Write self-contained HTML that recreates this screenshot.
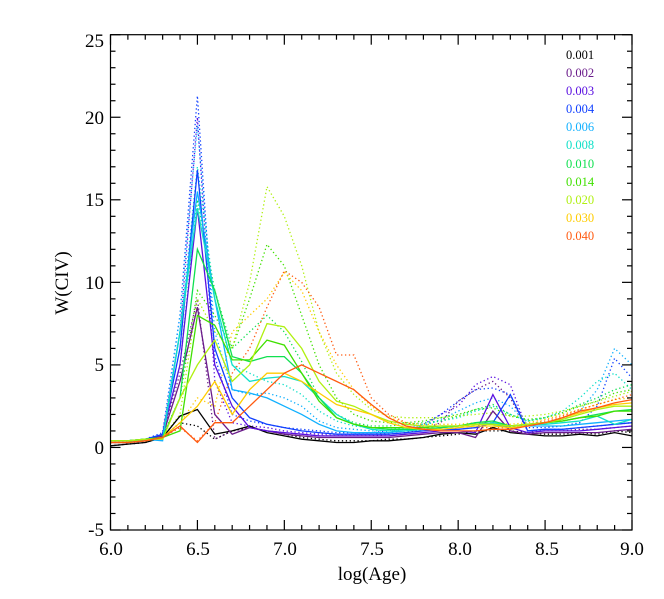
<!DOCTYPE html>
<html><head><meta charset="utf-8"><style>
html,body{margin:0;padding:0;background:#fff;width:664px;height:599px;overflow:hidden}
svg{display:block}
text{font-family:"Liberation Serif",serif}
</style></head><body>
<svg id="s" width="664" height="599" viewBox="0 0 664 599" xmlns="http://www.w3.org/2000/svg">
<g id="curves"></g>
<g id="axes" stroke="#000" stroke-width="1.2" fill="none"></g>
<g font-size="19" fill="#000" text-anchor="end" font-family="Liberation Serif, serif">
<text x="104" y="47">25</text>
<text x="104" y="124">20</text>
<text x="104" y="206">15</text>
<text x="104" y="289">10</text>
<text x="104" y="371">5</text>
<text x="104" y="454">0</text>
<text x="104" y="536">-5</text>
</g>
<g font-size="19" fill="#000" text-anchor="middle" font-family="Liberation Serif, serif">
<text x="111" y="555">6.0</text>
<text x="198" y="555">6.5</text>
<text x="285" y="555">7.0</text>
<text x="372" y="555">7.5</text>
<text x="460" y="555">8.0</text>
<text x="547" y="555">8.5</text>
<text x="632" y="555">9.0</text>
<text x="372" y="580">log(Age)</text>
<text transform="translate(68,283) rotate(-90)">W(CIV)</text>
</g>
<g font-size="12.5" font-family="Liberation Serif, serif">
<text x="566" y="59" fill="#000">0.001</text>
<text x="566" y="77" fill="#6a1b8a">0.002</text>
<text x="566" y="95" fill="#5a10e0">0.003</text>
<text x="566" y="113" fill="#1040ff">0.004</text>
<text x="566" y="131" fill="#10b0ff">0.006</text>
<text x="566" y="149" fill="#10e0c8">0.008</text>
<text x="566" y="168" fill="#10e050">0.010</text>
<text x="566" y="186" fill="#40e000">0.014</text>
<text x="566" y="204" fill="#b0f010">0.020</text>
<text x="566" y="222" fill="#ffcc00">0.030</text>
<text x="566" y="240" fill="#ff5a10">0.040</text>
</g>
</svg>
<script>
(function(){
var L=110.5,R=632,T=34.7,B=530;
function X(a){return L+(a-6)*(R-L)/3}
function Y(w){return T+(25-w)*(B-T)/30}
var ns="http://www.w3.org/2000/svg";
var ax=document.getElementById("axes");
function line(x1,y1,x2,y2){var l=document.createElementNS(ns,"line");l.setAttribute("x1",x1);l.setAttribute("y1",y1);l.setAttribute("x2",x2);l.setAttribute("y2",y2);ax.appendChild(l);}
var r=document.createElementNS(ns,"rect");r.setAttribute("x",L);r.setAttribute("y",T);r.setAttribute("width",R-L);r.setAttribute("height",B-T);ax.appendChild(r);
for(var i=0;i<=30;i++){var x=X(6+i*0.1);var len=(i%5==0)?10:5;line(x,B,x,B-len);line(x,T,x,T+len);}
for(var j=-5;j<=25;j++){var y=Y(j);var len=(j%5==0)?10:5;line(L,y,L+len,y);line(R,y,R-len,y);}
var C={a:"#000",b:"#6a1b8a",c:"#5a10e0",d:"#1040ff",e:"#10b0ff",f:"#10e0c8",g:"#10e050",h:"#40e000",i:"#b0f010",j:"#ffcc00",k:"#ff5a10"};
var S={
a:[0.1,0.2,0.3,0.6,1.9,2.3,0.8,1.0,1.3,0.9,0.7,0.5,0.4,0.3,0.3,0.4,0.4,0.5,0.6,0.8,0.9,0.8,1.2,0.9,0.8,0.7,0.7,0.8,0.7,0.9,0.7],
b:[0.3,0.3,0.4,0.7,4,8.5,2.0,0.8,1.2,1.0,0.8,0.7,0.6,0.6,0.6,0.6,0.6,0.7,0.8,0.9,0.9,0.6,2.2,1.0,0.8,0.9,0.9,0.9,0.9,1.0,1.1],
c:[0.3,0.3,0.4,0.8,5,14.5,5,2.5,1.2,1.0,0.9,0.8,0.7,0.7,0.7,0.7,0.7,0.8,0.9,1.0,1.0,0.9,3.2,1.2,0.9,1.0,1.0,1.0,1.1,1.2,1.3],
d:[0.4,0.4,0.5,0.8,6,16.8,6,3,1.8,1.4,1.2,1.0,0.9,0.8,0.8,0.8,0.8,0.9,1.0,1.1,1.1,1.2,1.5,3.2,1.0,1.1,1.1,1.2,1.3,1.4,1.5],
e:[0.4,0.4,0.5,0.4,7,15.5,9,3.5,3.3,3,2.5,2,1.4,1.0,0.9,0.9,0.9,1.0,1.1,1.2,1.3,1.4,1.4,1.2,1.3,1.3,1.3,1.4,1.5,1.6,1.7],
f:[0.4,0.4,0.5,0.5,7,14.5,9,5,4,4.2,4.3,4,3,2.0,1.4,1.1,1.0,1.0,1.1,1.2,1.3,1.4,1.5,1.3,1.4,1.4,1.5,1.6,1.9,1.4,1.7],
g:[0.4,0.4,0.5,0.6,3,12,9.5,5.5,5.2,5.5,5.5,4.5,3,1.8,1.4,1.2,1.1,1.1,1.1,1.2,1.3,1.5,1.6,1.3,1.4,1.5,1.6,1.8,2.0,2.2,2.3],
h:[0.4,0.4,0.5,0.6,1,8,7.4,5.3,5.3,6.5,6.2,4.5,2.8,1.8,1.4,1.2,1.2,1.2,1.2,1.3,1.3,1.4,1.4,1.3,1.4,1.5,1.6,1.8,1.9,2.2,2.2],
i:[0.4,0.4,0.5,0.5,3,5,6.5,4.0,5.0,7.5,7.3,6,4,2.8,2.5,2.0,1.6,1.4,1.3,1.3,1.3,1.4,1.4,1.3,1.4,1.5,1.7,2.0,2.3,2.5,2.5],
j:[0.3,0.3,0.4,0.6,1.5,2.5,4.0,2.0,3.5,4.5,4.5,4.0,3.3,2.6,2.3,2.0,1.5,1.2,1.1,1.1,1.2,1.3,1.3,1.2,1.3,1.5,1.8,2.1,2.4,2.6,2.7],
k:[0.3,0.3,0.4,0.6,1.3,0.3,1.5,1.5,2.5,3.5,4.5,5.0,4.5,4.0,3.5,2.6,1.8,1.3,1.1,1.0,1.0,1.0,1.1,1.1,1.3,1.5,1.8,2.2,2.4,2.7,2.9]};
var D={
a:[0.1,0.2,0.3,0.6,1.5,1.3,0.5,1.0,1.2,1.0,0.8,0.6,0.5,0.4,0.4,0.4,0.5,0.5,0.6,0.7,0.8,1.0,1.0,1.0,0.9,0.8,0.8,0.9,0.8,1.0,0.9],
b:[0.3,0.3,0.4,0.8,4.5,9.0,0.5,1.0,1.2,1.0,0.9,0.8,0.7,0.7,0.7,0.7,0.8,0.9,1.1,1.5,2.8,3.5,4.0,3.0,1.0,1.0,1.0,1.1,1.1,1.2,1.3],
c:[0.3,0.3,0.4,0.8,7,20,4,1.5,1.3,1.2,1.0,0.9,0.8,0.8,0.8,0.8,0.9,1.0,1.3,2.0,2.5,3.8,4.3,3.8,1.0,1.1,1.1,1.2,1.3,1.4,1.5],
d:[0.4,0.4,0.5,0.9,8,21.3,5.5,2,1.6,1.4,1.2,1.1,1.0,0.9,0.9,0.9,1.0,1.1,1.4,2.0,2.8,3.5,3.6,3.2,1.2,1.2,1.3,1.5,2.5,5.4,4.2],
e:[0.4,0.4,0.5,0.6,8,19.5,7,3.5,3.2,3.3,3.0,2.5,1.6,1.2,1.1,1.0,1.0,1.1,1.3,1.7,2.2,2.7,3.0,2.5,1.4,1.5,1.7,2.2,3.5,6.0,5.0],
f:[0.4,0.4,0.5,0.6,7,17,9,5,4.5,4.0,3.8,3.2,2.2,1.6,1.3,1.2,1.1,1.2,1.4,1.6,1.8,2.2,2.5,2.0,1.6,1.8,2.2,3.0,4.0,4.5,3.5],
g:[0.4,0.4,0.5,0.7,5,15,9.5,6,7,8.0,7,5.2,3,2,1.5,1.3,1.3,1.4,1.5,1.6,1.9,2.3,2.6,2.0,1.6,1.8,2.1,2.6,3.0,3.5,3.8],
h:[0.4,0.4,0.5,0.7,3,9.5,8,6,9,12.3,11,8,5,3,2,1.6,1.5,1.5,1.6,1.8,2.0,2.3,2.4,1.9,1.7,1.8,2.1,2.5,2.8,3.3,3.5],
i:[0.4,0.4,0.5,0.6,2,9,7,6,10,15.8,14,11,7,4.5,3.2,2.3,1.9,1.8,1.8,1.8,1.9,2.0,2.1,1.9,1.9,2.0,2.2,2.5,2.8,3.1,3.4],
j:[0.3,0.3,0.4,0.6,1.5,3,2.5,7,8,9,10.6,9.5,7,5,3.5,2.5,1.8,1.5,1.4,1.4,1.4,1.5,1.5,1.4,1.5,1.7,2.0,2.3,2.6,2.9,3.0],
k:[0.3,0.3,0.4,0.6,1.2,0.4,1.5,4.5,6,8.5,10.7,10.0,8.5,5.6,5.6,3,2.0,1.5,1.2,1.1,1.1,1.2,1.2,1.2,1.4,1.6,1.9,2.3,2.6,2.9,3.2]};
var g=document.getElementById("curves");
function add(arr,col,dot){var p=[];for(var i=0;i<arr.length;i++)p.push(X(6+i*0.1).toFixed(1)+","+Y(arr[i]).toFixed(1));
var pl=document.createElementNS(ns,"polyline");pl.setAttribute("points",p.join(" "));pl.setAttribute("fill","none");pl.setAttribute("stroke",col);pl.setAttribute("stroke-width","1.3");
if(dot){pl.setAttribute("stroke-dasharray","1.3 2.6");}g.appendChild(pl);}
for(var k in D)add(D[k],C[k],true);
for(var k in S)add(S[k],C[k],false);
})();
</script>
</body></html>
